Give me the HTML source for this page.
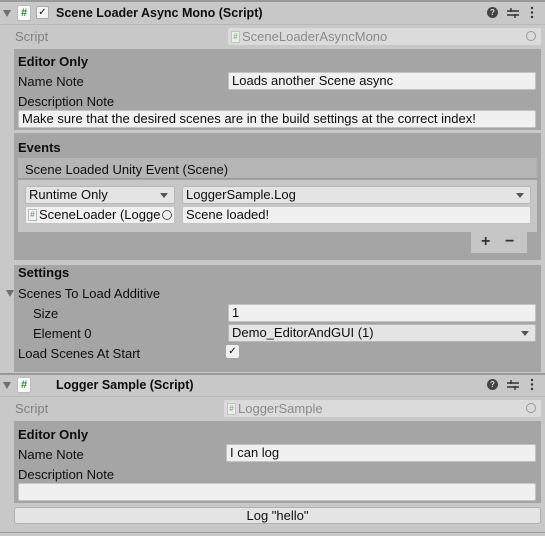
<!DOCTYPE html>
<html><head><meta charset="utf-8"><style>
*{box-sizing:border-box;margin:0;padding:0}
body{width:545px;height:536px;background:#c8c8c8;font-family:"Liberation Sans",sans-serif;font-size:13px;color:#0e0e0e;position:relative;overflow:hidden}
.a{position:absolute;white-space:nowrap}
.t{line-height:15px}
.b{font-weight:bold}
.box{position:absolute;background:#a5a5a5}
.fld{position:absolute;background:#f0f0f0;border:1px solid #c4c4c4;border-radius:2px;padding-left:3px;line-height:16px;white-space:nowrap;overflow:hidden;display:flex;align-items:center}
.dd{position:absolute;background:#e4e4e4;border:1px solid #b8b8b8;border-radius:2px;padding-left:3px;line-height:16px;white-space:nowrap}
.dd:after{content:"";position:absolute;right:6px;top:6px;border-left:4px solid transparent;border-right:4px solid transparent;border-top:5px solid #555}
.hash{display:inline-block;flex:none;width:9px;height:12px;background:#f4f4f4;border:1px solid #bbb;font-size:8px;color:#3a9a3a;text-align:center;line-height:10px;margin-right:2px}
.tri{position:absolute;border-left:4.5px solid transparent;border-right:4.5px solid transparent;border-top:7px solid #707070}
.gray{color:#808080}
.sf{position:absolute;background:#dbdbdb;border-radius:2px;padding-left:3px;height:17px;color:#8a8a8a;display:flex;align-items:center}
.circ{position:absolute;right:5px;top:3px;width:10px;height:10px;border:1px solid #999;border-radius:50%}
</style></head><body>
<!-- header 1 -->
<div class="a" style="left:0;top:0;width:545px;height:2px;background:#9a9a9a"></div>
<div class="a" style="left:0;top:24px;width:545px;height:1px;background:#b8b8b8"></div>
<div class="tri" style="left:3px;top:10px"></div>
<div class="a" style="left:17px;top:5px;width:14px;height:16px;background:#fafafa;border:1px solid #bbb;border-radius:2px;color:#2a8a2a;font-size:11px;font-weight:bold;text-align:center;line-height:14px">#</div>
<div class="a" style="left:36px;top:6px;width:13px;height:13px;background:#f4f4f4;border:1px solid #aaa;border-radius:2px;font-size:10px;text-align:center;line-height:11px">✓</div>
<div class="a t b" style="left:56px;top:6px;font-size:12.5px">Scene Loader Async Mono (Script)</div>
<div class="a" style="left:487px;top:7px;width:11px;height:11px;border-radius:50%;background:#444;color:#ddd;font-size:8px;font-weight:bold;text-align:center;line-height:11px">?</div>
<svg class="a" style="left:507px;top:7px" width="12" height="12"><path d="M0 4H12M0 8H12M4 1V5M8 7V11" stroke="#333" stroke-width="1.4" fill="none"/></svg>
<svg class="a" style="left:530px;top:6px" width="4" height="13"><circle cx="2" cy="2" r="1.2" fill="#333"/><circle cx="2" cy="6.5" r="1.2" fill="#333"/><circle cx="2" cy="11" r="1.2" fill="#333"/></svg>
<div class="a t gray" style="left:15px;top:29px">Script</div>
<div class="sf" style="left:228px;top:28px;width:313px"><span class="hash" style="opacity:.7">#</span>SceneLoaderAsyncMono<span class="circ"></span></div>

<div class="box" style="left:14px;top:49px;width:527px;height:81px"></div>
<div class="a t b" style="left:18px;top:54px">Editor Only</div>
<div class="a t" style="left:18px;top:74px">Name Note</div>
<div class="fld" style="left:228px;top:72px;width:308px;height:18px">Loads another Scene async</div>
<div class="a t" style="left:18px;top:94px">Description Note</div>
<div class="fld" style="left:18px;top:110px;width:518px;height:18px">Make sure that the desired scenes are in the build settings at the correct index!</div>

<div class="box" style="left:14px;top:133px;width:527px;height:127px"></div>
<div class="a t b" style="left:18px;top:140px">Events</div>
<div class="a" style="left:18px;top:158px;width:519px;height:21px;background:#b5b5b5;border-bottom:1px solid #9a9a9a"></div>
<div class="a t" style="left:25px;top:162px">Scene Loaded Unity Event (Scene)</div>
<div class="a" style="left:18px;top:180px;width:519px;height:52px;background:#c6c6c6"></div>
<div class="dd" style="left:25px;top:186px;width:150px;height:18px">Runtime Only</div>
<div class="dd" style="left:182px;top:186px;width:349px;height:18px">LoggerSample.Log</div>
<div class="fld" style="left:25px;top:206px;width:150px;height:18px;padding-left:2px"><span class="hash">#</span>SceneLoader (Logge<span style="position:absolute;right:2px;top:3px;width:10px;height:10px;border:1px solid #555;border-radius:50%;background:#f0f0f0"></span></div>
<div class="fld" style="left:182px;top:206px;width:349px;height:18px">Scene loaded!</div>
<div class="a" style="left:471px;top:232px;width:56px;height:21px;background:#c6c6c6"></div>
<div class="a b" style="left:481px;top:233px;font-size:16px;color:#333">+</div>
<div class="a b" style="left:505px;top:233px;font-size:16px;color:#333">−</div>

<div class="box" style="left:14px;top:265px;width:527px;height:107px"></div>
<div class="a t b" style="left:18px;top:265px">Settings</div>
<div class="tri" style="left:6px;top:290px"></div>
<div class="a t" style="left:18px;top:286px">Scenes To Load Additive</div>
<div class="a t" style="left:33px;top:306px">Size</div>
<div class="fld" style="left:228px;top:304px;width:308px;height:18px">1</div>
<div class="a t" style="left:33px;top:326px">Element 0</div>
<div class="dd" style="left:228px;top:324px;width:308px;height:18px">Demo_EditorAndGUI (1)</div>
<div class="a t" style="left:18px;top:346px">Load Scenes At Start</div>
<div class="a" style="left:226px;top:345px;width:13px;height:13px;background:#f0f0f0;border-radius:2px;font-size:10px;text-align:center;line-height:13px">✓</div>

<!-- header 2 -->
<div class="a" style="left:0;top:373px;width:545px;height:2px;background:#9a9a9a"></div>
<div class="a" style="left:0;top:396px;width:545px;height:1px;background:#b8b8b8"></div>
<div class="tri" style="left:3px;top:382px"></div>
<div class="a" style="left:17px;top:377px;width:14px;height:16px;background:#fafafa;border:1px solid #bbb;border-radius:2px;color:#2a8a2a;font-size:11px;font-weight:bold;text-align:center;line-height:14px">#</div>
<div class="a t b" style="left:56px;top:378px;font-size:12.5px">Logger Sample (Script)</div>
<div class="a" style="left:487px;top:379px;width:11px;height:11px;border-radius:50%;background:#444;color:#ddd;font-size:8px;font-weight:bold;text-align:center;line-height:11px">?</div>
<svg class="a" style="left:507px;top:379px" width="12" height="12"><path d="M0 4H12M0 8H12M4 1V5M8 7V11" stroke="#333" stroke-width="1.4" fill="none"/></svg>
<svg class="a" style="left:530px;top:378px" width="4" height="13"><circle cx="2" cy="2" r="1.2" fill="#333"/><circle cx="2" cy="6.5" r="1.2" fill="#333"/><circle cx="2" cy="11" r="1.2" fill="#333"/></svg>
<div class="a t gray" style="left:15px;top:401px">Script</div>
<div class="sf" style="left:224px;top:400px;width:317px"><span class="hash" style="opacity:.7">#</span>LoggerSample<span class="circ"></span></div>

<div class="box" style="left:14px;top:421px;width:527px;height:82px"></div>
<div class="a t b" style="left:18px;top:427px">Editor Only</div>
<div class="a t" style="left:18px;top:447px">Name Note</div>
<div class="fld" style="left:226px;top:444px;width:310px;height:18px">I can log</div>
<div class="a t" style="left:18px;top:467px">Description Note</div>
<div class="fld" style="left:18px;top:483px;width:518px;height:18px"></div>
<div class="a" style="left:14px;top:507px;width:527px;height:17px;background:#e4e4e4;border:1px solid #b0b0b0;border-radius:3px;text-align:center;line-height:15px">Log "hello"</div>
<div class="a" style="left:0;top:532px;width:545px;height:1px;background:#9a9a9a"></div>
</body></html>
